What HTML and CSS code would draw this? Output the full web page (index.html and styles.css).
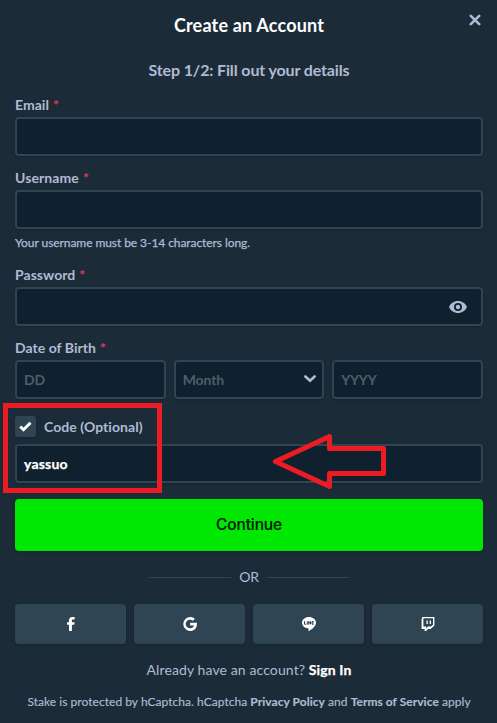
FILE: index.html
```html
<!DOCTYPE html>
<html lang="en">
<head>
<meta charset="utf-8">
<title>Create an Account</title>
<link rel="stylesheet" href="styles.css">
</head>
<body>
<main class="modal">
  <button class="close" aria-label="Close"><svg width="12" height="12" viewBox="0 0 12 12"><path d="M1.800 1.800l8.400 8.400M10.200 1.800l-8.400 8.400"/></svg></button>
  <h1>Create an Account</h1>
  <h2>Step 1/2: Fill out your details</h2>
  <form>
    <div class="field">
      <div class="label">Email<i>*</i></div>
      <div class="input"></div>
    </div>
    <div class="field">
      <div class="label username">Username<i>*</i></div>
      <div class="input"></div>
      <div class="hint">Your username must be 3-14 characters long.</div>
    </div>
    <div class="field">
      <div class="label">Password<i>*</i></div>
      <div class="input end"><svg class="eye" width="18" height="12" viewBox="0 0 18 12"><path fill-rule="evenodd" d="M9 0C4.900 0 1.500 2.500 0 6c1.500 3.500 4.900 6 9 6s7.500-2.500 9-6C16.500 2.500 13.100 0 9 0zm0 10a4 4 0 1 1 0-8 4 4 0 0 1 0 8zm0-1.800a2.200 2.200 0 1 0 0-4.400 2.200 2.200 0 0 0 0 4.400z"/></svg></div>
    </div>
    <div class="field">
      <div class="label">Date of Birth<i>*</i></div>
      <div class="date">
        <div class="input placeholder">DD</div>
        <div class="input placeholder">Month<svg class="chevron" width="12" height="8" viewBox="0 0 12 8"><path d="M1.400 1.500L6 5.800l4.600-4.300"/></svg></div>
        <div class="input placeholder year">YYYY</div>
      </div>
    </div>
    <div class="code">
      <div class="check-row"><span class="check"><svg width="13" height="11" viewBox="0 0 13 11"><path d="M1.300 5.500l3.200 3.200L11.500 1.800"/></svg></span><span class="check-label">Code (Optional)</span></div>
      <div class="input value">yassuo</div>
      <div class="box-mark"></div>
      <svg class="arrow-mark" width="116" height="60" viewBox="0 0 116 60"><path d="M5.500 30.500L59.500 5.500V17.500H113.500V42.500H59.500V55.500Z"/></svg>
    </div>
    <button type="button" class="continue">Continue</button>
  </form>
  <div class="or">OR</div>
  <div class="social">
    <button aria-label="Facebook"><svg width="14" height="14" viewBox="0 0 14 14"><path d="M5 14V7.700H3V5.200h2V3.500C5 1.200 6.200 0 8.300 0h2.300v2.500H9.100C8.100 2.500 7.900 3 7.900 3.700v1.500h2.700l-.4 2.500H7.900V14z"/></svg></button>
    <button aria-label="Google"><svg width="14" height="14" viewBox="0 0 14 14"><path d="M7.100 5.700v2.800h3.900c-.4 1.700-1.800 2.800-3.900 2.800a4.300 4.300 0 1 1 2.700-7.600l2.100-2A7 7 0 1 0 7.100 14c4.300 0 7.200-3.100 6.800-8.300z"/></svg></button>
    <button aria-label="Line"><svg width="14" height="14" viewBox="0 0 14 14"><path d="M7 0C3.100 0 0 2.500 0 5.700c0 2.900 2.500 5.200 5.900 5.600.8.200.7.600.5 2.200 0 .4.300.6.700.4C9.600 12.500 14 9.300 14 5.700 14 2.500 10.900 0 7 0z"/><path class="cut" d="M2.500 4.200v3h1.700M5.300 4.200v3.400M6.700 7.600V4.500L8.500 7.200V4.200M11.700 4.600H10V7.200h1.700M10 5.900h1.600"/></svg></button>
    <button aria-label="Twitch"><svg width="14" height="14" viewBox="0 0 14 14"><path fill-rule="evenodd" d="M1.400 0H13.400v8.500L9.700 12H7.300L5 14H3.600v-2H.6V2.300zm1 1.300v8.300h2.700v1.700l1.700-1.700h3.100L12 7.700V1.300z"/><path d="M5.500 3.600h1.300v3.500H5.500zM8.700 3.600H10v3.500H8.700z"/></svg></button>
  </div>
  <p class="signin">Already have an account? <b>Sign In</b></p>
  <p class="legal">Stake is protected by hCaptcha. hCaptcha <b>Privacy Policy</b> and <b>Terms of Service</b> apply</p>
</main>
</body>
</html>
```
FILE: styles.css
```css
* { box-sizing: border-box; }
body { margin: 0; background: #1b2c38; color: #b1bad3; font-family: Lato, "Liberation Sans", sans-serif; }
.modal { position: relative; width: 497px; height: 723px; padding: 13px 14px 0 15px; overflow: hidden; }
button { border: 0; padding: 0; font: inherit; }
svg { display: block; fill: currentColor; }
.close { position: absolute; top: 14px; right: 16px; background: none; color: #b1bad3; }
.close svg { fill: none; stroke: currentColor; stroke-width: 2.6; stroke-linecap: round; }
h1, h2, p { margin: 0; text-align: center; white-space: nowrap; }
h1 { font-size: 18px; line-height: 24px; color: #fff; font-weight: 700; letter-spacing: .18px; }
h2 { margin-top: 22px; font-size: 16px; line-height: 22px; font-weight: 700; letter-spacing: -.13px; }
form { margin-top: 15px; }
.field { margin-bottom: 13px; }
.label { height: 21px; line-height: 18px; font-size: 14px; font-weight: 700; letter-spacing: .04px; }
.username { letter-spacing: .1px; }
.label i { margin-left: 4px; color: #e0385a; font-style: normal; }
.input { display: flex; align-items: center; height: 39px; padding: 0 7px; border: 2px solid #2f4553; border-radius: 4px; background: #0f212e; box-shadow: 0 1px 3px rgba(0,0,0,.2); font-size: 14px; font-weight: 700; }
.hint { padding-top: 5px; height: 24px; line-height: 18px; font-size: 12px; letter-spacing: -.07px; -webkit-text-stroke: .25px; }
.end { justify-content: flex-end; padding-right: 14px; }
.date { display: grid; grid-template-columns: repeat(3, 1fr); gap: 8px; }
.placeholder { justify-content: space-between; color: #4d5e68; padding-bottom: 1px; letter-spacing: -.1px; }
.year { letter-spacing: -.3px; }
.chevron { fill: none; stroke: #b1bad3; stroke-width: 2.6; stroke-linecap: round; margin-right: -1px; }
.code { position: relative; margin-top: 17px; }
.check-row { display: flex; align-items: center; gap: 8px; height: 21px; margin-bottom: 7px; font-size: 14px; font-weight: 700; }
.check-label { letter-spacing: .06px; }
.check { display: grid; place-items: center; width: 21px; height: 21px; border-radius: 3px; background: #2f4553; box-shadow: 0 1px 3px rgba(0,0,0,.2); color: #fff; }
.check svg { fill: none; stroke: currentColor; stroke-width: 3; }
.value { color: #fff; letter-spacing: .2px; -webkit-text-stroke: .25px; }
.box-mark { position: absolute; left: -12px; top: -13px; width: 159px; height: 90px; border: 5px solid #ed1c24; }
.arrow-mark { position: absolute; left: 255px; top: 15px; fill: none; stroke: #ed1c24; stroke-width: 5; stroke-linejoin: round; }
.continue { display: block; width: 100%; height: 52px; padding-bottom: 1px; margin-top: 16px; border-radius: 4px; background: #00e701; color: #05200d; font-size: 15.500px; font-weight: 500; letter-spacing: -.1px; box-shadow: 0 1px 3px rgba(0,0,0,.2); font-family: Inter, sans-serif; -webkit-text-stroke: .15px; }
.or { display: flex; align-items: center; justify-content: center; gap: 8px; height: 20px; margin-top: 16px; font-size: 14px; line-height: 18px; letter-spacing: -.2px; }
.or::before, .or::after { content: ""; width: 82px; height: 1px; background: #2f4553; }
.social { display: grid; grid-template-columns: repeat(4, 1fr); gap: 8px; margin-top: 17px; }
.social button { display: grid; place-items: center; height: 40px; border-radius: 4px; background: #2f4553; color: #fff; box-shadow: 0 1px 3px rgba(0,0,0,.2); }
.cut { fill: none; stroke: #2f4553; stroke-width: 1; }
.signin { margin-top: 16px; font-size: 14px; line-height: 20px; letter-spacing: .11px; }
.signin b { color: #fff; -webkit-text-stroke: .25px; }
.legal { margin-top: 13px; font-size: 12px; line-height: 18px; letter-spacing: .04px; -webkit-text-stroke: .15px; }
```
